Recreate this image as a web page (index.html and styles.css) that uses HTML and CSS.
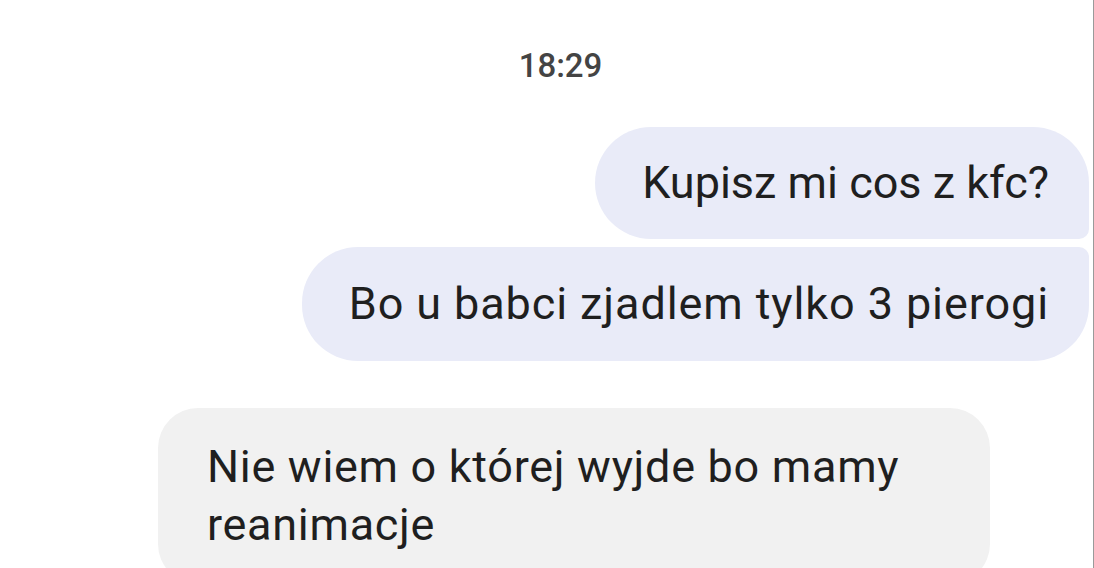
FILE: index.html
```html
<!DOCTYPE html>
<html lang="pl">
<head>
<meta charset="utf-8">
<title>Wiadomości</title>
<link rel="stylesheet" href="styles.css">
</head>
<body>
<div class="screen">
  <div class="time">18:29</div>
  <div class="thread">
    <div class="msg out first">Kupisz mi cos z kfc?</div>
    <div class="msg out last">Bo u babci zjadlem tylko 3 pierogi</div>
    <div class="msg in">Nie wiem o której wyjde bo mamy reanimacje</div>
  </div>
</div>
</body>
</html>
```

FILE: styles.css
```css
html, body {
  margin: 0;
  padding: 0;
  background: #ffffff;
}

body {
  font-family: Roboto, "Noto Sans", "Liberation Sans", sans-serif;
  color: #1f1f1f;
}

.screen {
  box-sizing: border-box;
  width: 1094px;
  height: 568px;
  overflow: hidden;
  border-right: 1px solid #9a9a9a;
  display: flex;
  flex-direction: column;
}

.time {
  padding-top: 46px;
  padding-left: 28px;
  text-align: center;
  font-size: 33px;
  line-height: 40px;
  font-weight: 500;
  color: #444444;
}

.thread {
  margin-top: 41px;
  display: flex;
  flex-direction: column;
}

.msg {
  box-sizing: border-box;
  font-size: 45px;
  line-height: 58px;
}

.out {
  align-self: flex-end;
  margin-right: 4px;
  background: #e9ebf8;
  padding: 27px 40px 27px 47px;
  border-radius: 56px;
}

.out.first {
  border-bottom-right-radius: 10px;
}

.out.last {
  margin-top: 8px;
  padding-top: 28px;
  padding-bottom: 28px;
  letter-spacing: 0.9px;
  border-top-right-radius: 10px;
}

.in {
  align-self: flex-start;
  margin-left: 158px;
  margin-top: 47px;
  width: 832px;
  padding: 30px 48px 30px 49px;
  letter-spacing: 0.7px;
  background: #f1f1f1;
  border-radius: 40px;
}
```
